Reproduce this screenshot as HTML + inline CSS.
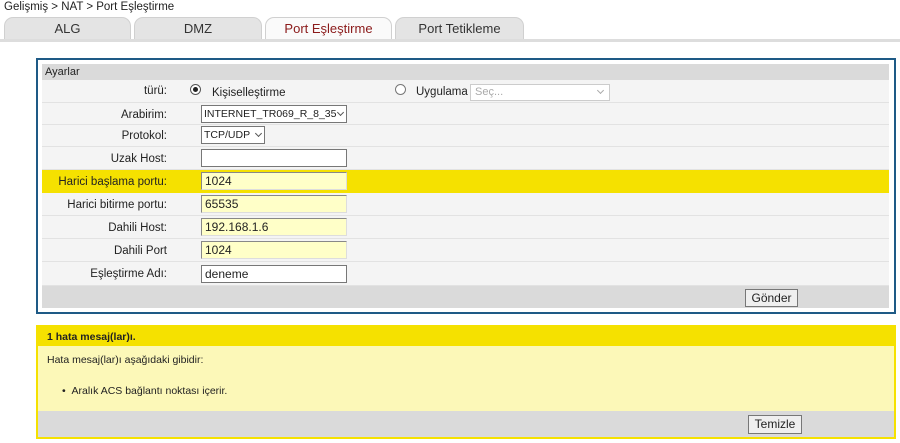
<!DOCTYPE html>
<html><head><meta charset="utf-8"><style>
*{box-sizing:border-box;margin:0;padding:0}
body{width:900px;height:443px;background:#fff;font-family:"Liberation Sans",Arial,sans-serif;font-size:12px;color:#222;position:relative;overflow:hidden}
.a{position:absolute}
.tab{position:absolute;top:17px;height:22px;background:#e4e4e4;border:1px solid #d0d0d0;border-bottom:none;border-radius:9px 9px 0 0;text-align:center;font-size:13px;line-height:22px;color:#333}
.row{position:absolute;left:42px;width:847px;background:#f4f4f4;border-bottom:1px solid #e2e2e2}
.lbl{position:absolute;right:722px;font-size:11.5px;color:#222;white-space:nowrap}
.inp{position:absolute;left:159px;width:146px;height:18px;border:1px solid #777;background:#fff;font-size:12px;line-height:16px;padding-left:3px;white-space:nowrap;overflow:hidden}
.y{background:#ffffc8;border-color:#ddd;border-left:1px solid #888;border-top:1px solid #888}
.btn{position:absolute;border:1px solid #777;background:#efefef;font-size:12px;text-align:center;line-height:16px}
.arr{position:absolute;right:3px;top:5px;width:5px;height:5px;border-right:1px solid #555;border-bottom:1px solid #555;transform:rotate(45deg)}
</style></head><body>
<div class="a" style="left:4px;top:1px;font-size:11.5px">Gelişmiş &gt; NAT &gt; Port Eşleştirme</div>
<div class="tab" style="left:4px;width:127px">ALG</div>
<div class="tab" style="left:134px;width:128px">DMZ</div>
<div class="tab" style="left:265px;width:127px;background:#fafafa;color:#8b1a1a">Port Eşleştirme</div>
<div class="tab" style="left:395px;width:129px">Port Tetikleme</div>
<div class="a" style="left:0;top:39px;width:900px;height:3px;background:#ddd"></div>

<div class="a" style="left:36px;top:58px;width:860px;height:256px;border:2px solid #1e5a86"></div>
<div class="a" style="left:42px;top:64px;width:847px;height:16px;background:#dadada;font-size:11px;padding:2px 0 0 3px">Ayarlar</div>

<div class="row" style="top:80px;height:23px">
<div class="lbl" style="top:5px">türü:</div>
<div class="a" style="left:148px;top:4px;width:11px;height:11px;border:1px solid #555;border-radius:50%;background:#fff"><div class="a" style="left:2px;top:2px;width:5px;height:5px;border-radius:50%;background:#222"></div></div>
<div class="a" style="left:170px;top:7px;font-size:11.5px">Kişiselleştirme</div>
<div class="a" style="left:353px;top:4px;width:11px;height:11px;border:1px solid #777;border-radius:50%;background:#fff"></div>
<div class="a" style="left:374px;top:6px;font-size:11.5px">Uygulama</div>
<div class="a" style="left:428px;top:4px;width:140px;height:17px;border:1px solid #ccc;background:#fff;color:#aaa;font-size:11px;padding:1px 4px">Seç...<span class="arr" style="right:6px;top:3px;border-color:#aaa"></span></div>
</div>
<div class="row" style="top:103px;height:22px"><div class="lbl" style="top:6px">Arabirim:</div><div class="inp" style="top:2px;width:146px;font-size:10.5px;padding-left:2px">INTERNET_TR069_R_8_35<span class="arr" style="top:4px"></span></div></div>
<div class="row" style="top:125px;height:22px"><div class="lbl" style="top:5px">Protokol:</div><div class="inp" style="top:1px;width:64px;font-size:10.5px;padding-left:2px">TCP/UDP<span class="arr" style="top:4px"></span></div></div>
<div class="row" style="top:147px;height:23px"><div class="lbl" style="top:6px">Uzak Host:</div><div class="inp" style="top:2px"></div></div>
<div class="row" style="top:170px;height:23px;background:#f5e100;border:none"><div class="lbl" style="top:6px">Harici başlama portu:</div><div class="inp y" style="top:2px">1024</div></div>
<div class="row" style="top:193px;height:23px"><div class="lbl" style="top:6px">Harici bitirme portu:</div><div class="inp y" style="top:2px">65535</div></div>
<div class="row" style="top:216px;height:23px"><div class="lbl" style="top:6px">Dahili Host:</div><div class="inp y" style="top:2px">192.168.1.6</div></div>
<div class="row" style="top:239px;height:23px"><div class="lbl" style="top:6px">Dahili Port</div><div class="inp y" style="top:2px">1024</div></div>
<div class="row" style="top:262px;height:24px"><div class="lbl" style="top:6px">Eşleştirme Adı:</div><div class="inp" style="top:3px">deneme</div></div>
<div class="a" style="left:42px;top:286px;width:847px;height:22px;background:#dadada"></div>
<div class="btn" style="left:745px;top:289px;width:53px;height:18px">Gönder</div>

<div class="a" style="left:36px;top:325px;width:860px;height:114px;border:2px solid #f5e100;background:#fcf8b8"></div>
<div class="a" style="left:36px;top:325px;width:860px;height:21px;background:#f5e100;font-size:10.5px;font-weight:bold;padding:6px 0 0 11px">1 hata mesaj(lar)ı.</div>
<div class="a" style="left:47px;top:354px;font-size:10.5px">Hata mesaj(lar)ı aşağıdaki gibidir:</div>
<div class="a" style="left:62px;top:385px;font-size:10.5px">•&nbsp;&nbsp;Aralık ACS bağlantı noktası içerir.</div>
<div class="a" style="left:38px;top:411px;width:856px;height:26px;background:#dadada"></div>
<div class="btn" style="left:748px;top:415px;width:54px;height:19px;line-height:17px">Temizle</div>
</body></html>
